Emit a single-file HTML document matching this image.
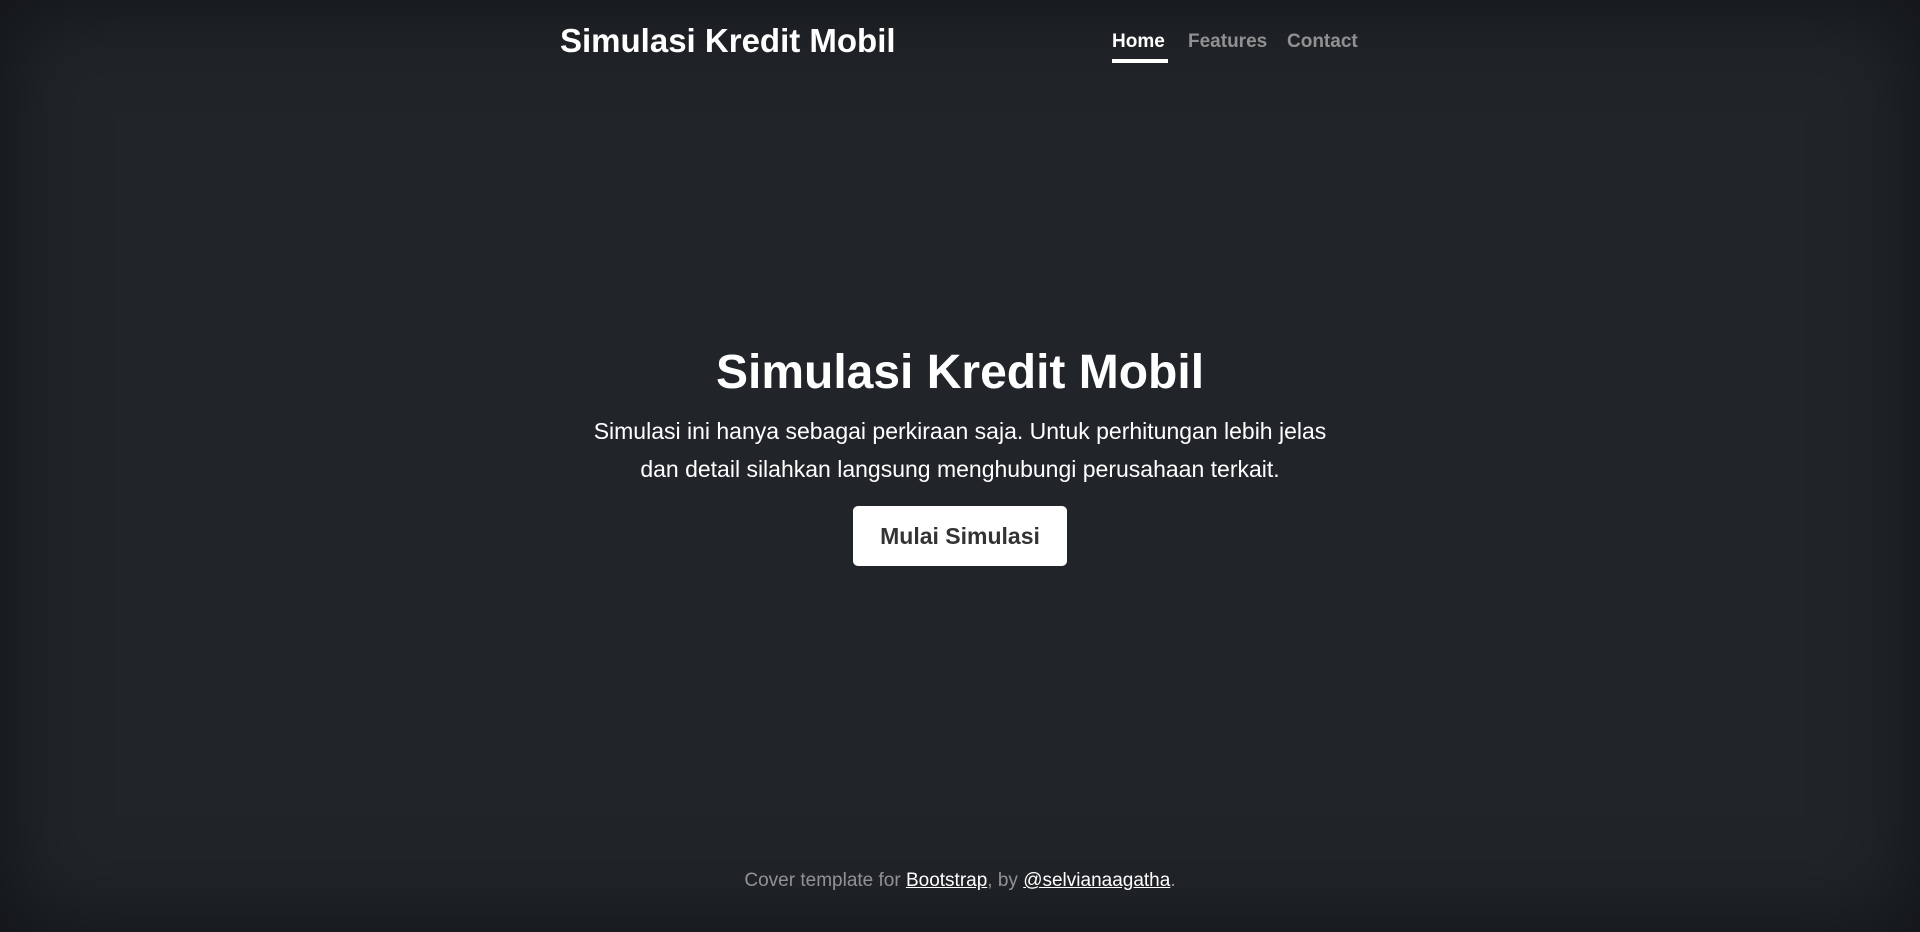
<!DOCTYPE html>
<html><head><meta charset="utf-8"><style>
html,body{margin:0;padding:0;width:1920px;height:932px;overflow:hidden}
body{background:#212529;box-shadow:inset 0 0 6rem rgba(0,0,0,.5);font-family:"Liberation Sans",sans-serif;color:#fff;position:relative}
.abs{position:absolute;white-space:nowrap}
.brand{left:560px;top:21px;font-size:33px;line-height:40px;font-weight:bold}
.nav{top:30px;font-size:19px;font-weight:bold;line-height:24px;color:rgba(255,255,255,.5)}
.ul{position:absolute;left:1112px;top:59px;width:56px;height:4px;background:#fff}
h1{position:absolute;left:0;width:1920px;text-align:center;top:344px;margin:0;font-size:48px;line-height:58px;font-weight:bold}
.lead{position:absolute;left:0;width:1920px;text-align:center;top:412px;font-size:23px;line-height:38px}
.btn{position:absolute;left:853px;top:506px;width:214px;height:60px;background:#fff;border-radius:5px;color:#333;font-weight:bold;font-size:23px;line-height:60px;text-align:center}
.foot{position:absolute;left:0;width:1920px;text-align:center;top:869px;font-size:19px;line-height:24px;color:rgba(255,255,255,.5)}
.foot a{color:#fff;text-decoration:underline}
</style></head><body>
<div class="abs brand">Simulasi Kredit Mobil</div>
<div class="abs nav" style="left:1112px;color:#fff">Home</div>
<div class="abs nav" style="left:1188px">Features</div>
<div class="abs nav" style="left:1287px">Contact</div>
<div class="ul"></div>
<h1>Simulasi Kredit Mobil</h1>
<div class="lead">Simulasi ini hanya sebagai perkiraan saja. Untuk perhitungan lebih jelas<br>dan detail silahkan langsung menghubungi perusahaan terkait.</div>
<div class="btn">Mulai Simulasi</div>
<div class="foot">Cover template for <a>Bootstrap</a>, by <a>@selvianaagatha</a>.</div>
</body></html>
